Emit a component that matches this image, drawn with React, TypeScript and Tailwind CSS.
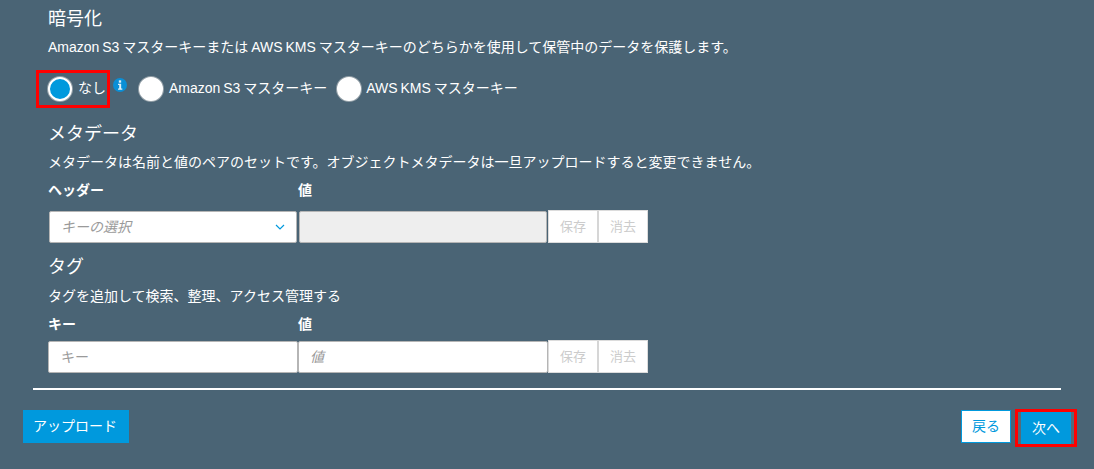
import React from "react";

const font = { fontFamily: '"Liberation Sans", "Noto Sans CJK JP", sans-serif' };

function Radio({ checked }: { checked?: boolean }) {
  return (
    <span className={`block w-[24px] h-[24px] rounded-full border-2 border-white shadow-[0_0_0_1px_rgba(210,210,210,0.55)] shrink-0 ${checked ? "bg-[#0099dd]" : "bg-white"}`} />
  );
}

function SmallButtons() {
  return (
    <div className="flex h-[33px] w-[100px] shrink-0 border border-[#dcdcdc]">
      <div className="w-[50px] bg-white border-r-2 border-[#d6d6d6] flex items-center justify-center text-[13px] text-[#cccccc]">保存</div>
      <div className="flex-1 bg-white flex items-center justify-center text-[13px] text-[#cccccc]">消去</div>
    </div>
  );
}

export default function App() {
  return (
    <div style={font} className="w-[1094px] h-[469px] overflow-hidden bg-[#4a6475] text-white">
      <div className="pl-[48px] pr-[33px] pt-[9px]">
        <h2 className="text-[18px] leading-[20px] font-normal">暗号化</h2>
        <p className="mt-[9px] text-[14px] leading-[18px] [word-spacing:-1px]">Amazon S3 マスターキーまたは AWS KMS マスターキーのどちらかを使用して保管中のデータを保護します。</p>

        <div className="mt-[14px] h-[37px] flex items-center">
          <div className="relative flex items-center">
            <div className="absolute left-[-12px] top-[-7px] w-[74px] h-[38px] border-[3px] border-[#ff0000]" />
            <Radio checked />
            <span className="ml-[6px] text-[14px]">なし</span>
          </div>
          <svg viewBox="0 0 12 12" className="ml-[7px] mb-[7px] w-[14px] h-[14px]">
            <circle cx="6" cy="6" r="6" fill="#0a8fd6" />
            <rect x="5" y="2" width="2" height="2" fill="#dff2fb" />
            <path d="M4.3 5h2.7v4h1v1H4.3V9h1V6h-1z" fill="#dff2fb" />
          </svg>
          <div className="ml-[12px] flex items-center">
            <Radio />
            <span className="ml-[6px] text-[14px] [word-spacing:-1px]">Amazon S3 マスターキー</span>
          </div>
          <div className="ml-[10px] flex items-center">
            <Radio />
            <span className="ml-[5px] text-[14px] [word-spacing:-1px]">AWS KMS マスターキー</span>
          </div>
        </div>

        <h2 className="mt-[17px] text-[18px] leading-[20px] font-normal">メタデータ</h2>
        <p className="mt-[9px] text-[14px] leading-[18px]">メタデータは名前と値のペアのセットです。オブジェクトメタデータは一旦アップロードすると変更できません。</p>
        <div className="mt-[10px] flex text-[14px] leading-[18px] font-bold">
          <span className="w-[250px]">ヘッダー</span>
          <span>値</span>
        </div>

        <div className="mt-[11px] flex items-start h-[33px]">
          <div className="ml-[1px] mt-[1px] w-[248px] h-[32px] bg-white rounded-[2px] border border-[#b5b5b5] flex items-center justify-between pl-[11px] pr-[11px]">
            <span className="text-[14px] italic text-[#9a9a9a]">キーの選択</span>
            <svg viewBox="0 0 10 6" className="w-[10px] h-[6px]">
              <path d="M1 1l4 4 4-4" fill="none" stroke="#0099dd" strokeWidth="1.2" />
            </svg>
          </div>
          <div className="ml-[2px] mt-[1px] w-[248px] h-[32px] bg-[#eeeeee] rounded-[2px] border border-[#b5b5b5]" />
          <div className="ml-[1px]"><SmallButtons /></div>
        </div>

        <h2 className="mt-[14px] text-[18px] leading-[20px] font-normal">タグ</h2>
        <p className="mt-[10px] text-[14px] leading-[18px]">タグを追加して検索、整理、アクセス管理する</p>
        <div className="mt-[10px] flex text-[14px] leading-[18px] font-bold">
          <span className="w-[250px]">キー</span>
          <span>値</span>
        </div>

        <div className="mt-[7px] flex items-start h-[33px]">
          <div className="mt-[1px] w-[250px] h-[32px] bg-white rounded-[2px] border border-[#b5b5b5] flex items-center pl-[12px] text-[14px] text-[#9a9a9a]">キー</div>
          <div className="w-[250px] h-[32px] mt-[1px] bg-white rounded-[2px] border border-[#b5b5b5] flex items-center pl-[11px] text-[14px] italic text-[#9a9a9a]">値</div>
          <SmallButtons />
        </div>
      </div>

      <div className="mt-[15px] ml-[33px] w-[1028px] h-[2px] bg-white" />

      <div className="mt-[20px] pl-[23px] pr-[17px] flex items-start justify-between">
        <button className="w-[106px] h-[33px] bg-[#0099dd] text-white text-[14px] pr-[2px]">アップロード</button>
        <div className="flex items-start">
          <button className="w-[50px] h-[33px] bg-white border border-[#0099dd] text-[#0099dd] text-[14px]">戻る</button>
          <div className="ml-[4px] mt-[-1px] w-[62px] h-[38px] border-[3px] border-[#ff0000] bg-[#566a78] flex justify-center">
            <button className="w-[50px] h-[32px] bg-[#0099dd] text-white text-[14px]">次へ</button>
          </div>
        </div>
      </div>
    </div>
  );
}
